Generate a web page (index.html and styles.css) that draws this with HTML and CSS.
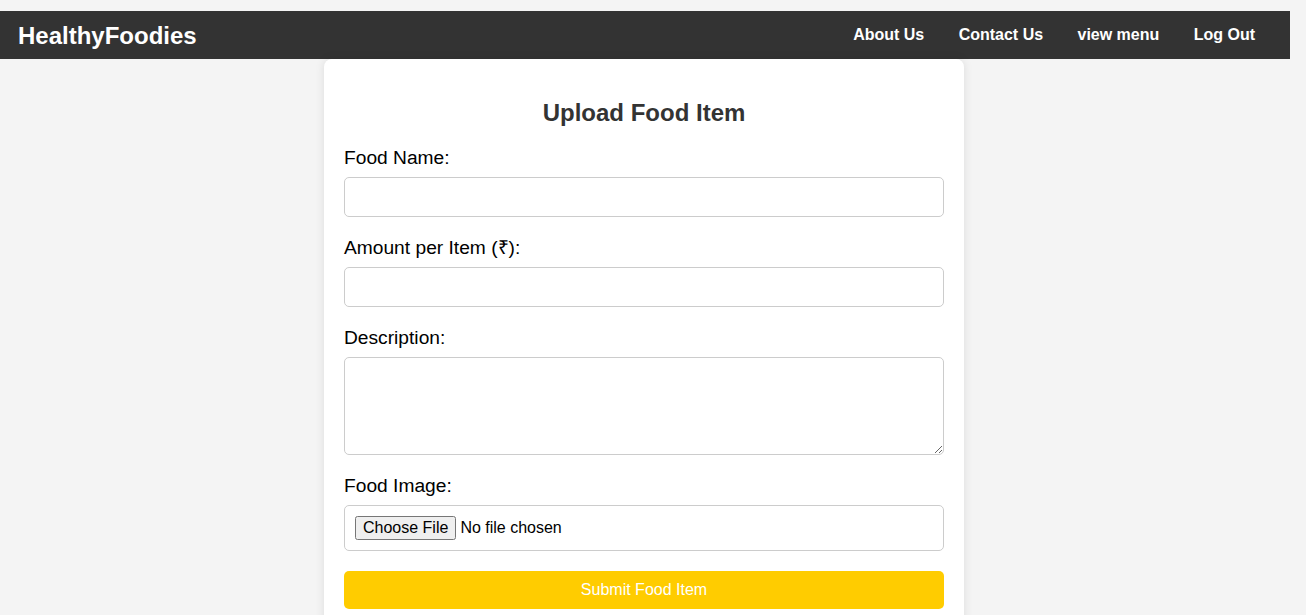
FILE: index.html
```html
<!DOCTYPE html>
<html lang="en">
<head>
<meta charset="utf-8">
<title>HealthyFoodies - Upload Food Item</title>
<link rel="stylesheet" href="styles.css">
</head>
<body>
<div class="page">
  <nav class="navbar">
    <div class="logo">HealthyFoodies</div>
    <div class="links">
      <a href="#">About Us</a>
      <a href="#">Contact Us</a>
      <a href="#">view menu</a>
      <a href="#">Log Out</a>
    </div>
  </nav>
  <div class="content">
    <main class="card">
      <h2 class="title">Upload Food Item</h2>
      <form class="form">
        <label class="label" for="name">Food Name:</label>
        <input class="field" type="text" id="name">
        <label class="label" for="amount">Amount per Item (₹):</label>
        <input class="field" type="text" id="amount">
        <label class="label" for="desc">Description:</label>
        <textarea class="field area" id="desc"></textarea>
        <label class="label" for="img">Food Image:</label>
        <input class="field file" type="file" id="img">
        <button class="submit" type="button">Submit Food Item</button>
      </form>
    </main>
  </div>
</div>
</body>
</html>
```
FILE: styles.css
```css
html, body {
  margin: 0;
  padding: 0;
  background: #f4f4f4;
  font-family: "Liberation Sans", Arial, sans-serif;
}
.page {
  width: 1290px;
  padding-top: 11px;
}
.navbar {
  display: flex;
  align-items: center;
  justify-content: space-between;
  height: 48px;
  background: #333;
  padding: 0 20px 0 18px;
  box-sizing: border-box;
}
.logo {
  color: #fff;
  font-weight: bold;
  font-size: 24px;
  line-height: 28px;
  margin-top: 1px;
}
.links {
  display: flex;
  gap: 4.4px;
}
.links a {
  color: #fff;
  text-decoration: none;
  font-weight: bold;
  font-size: 16px;
  padding: 0 15px;
}
.content {
  padding-right: 2px;
}
.card {
  width: 640px;
  box-sizing: border-box;
  margin: 0 auto;
  background: #fff;
  padding: 20px;
  border-radius: 8px;
  box-shadow: 0 0 10px rgba(0, 0, 0, 0.1);
}
.title {
  text-align: center;
  color: #333;
  font-size: 24px;
  line-height: 28px;
  margin: 20px 0;
}
.form {
  display: flex;
  flex-direction: column;
}
.label {
  font-size: 19.2px;
  line-height: 22px;
  margin-bottom: 8px;
  color: #000;
}
.field {
  display: block;
  width: 100%;
  box-sizing: border-box;
  padding: 10px;
  font-family: "Liberation Sans", Arial, sans-serif;
  font-size: 16px;
  border: 1px solid #ccc;
  border-radius: 5px;
  margin: 0 0 20px 0;
  background: #fff;
}
.area {
  height: 98px;
}
.file {
  height: 46px;
  padding: 10px;
}
.submit {
  width: 100%;
  height: 38px;
  border: none;
  border-radius: 5px;
  background: #ffcc00;
  color: #fff;
  font-family: "Liberation Sans", Arial, sans-serif;
  font-size: 16px;
  padding: 0;
}
```
